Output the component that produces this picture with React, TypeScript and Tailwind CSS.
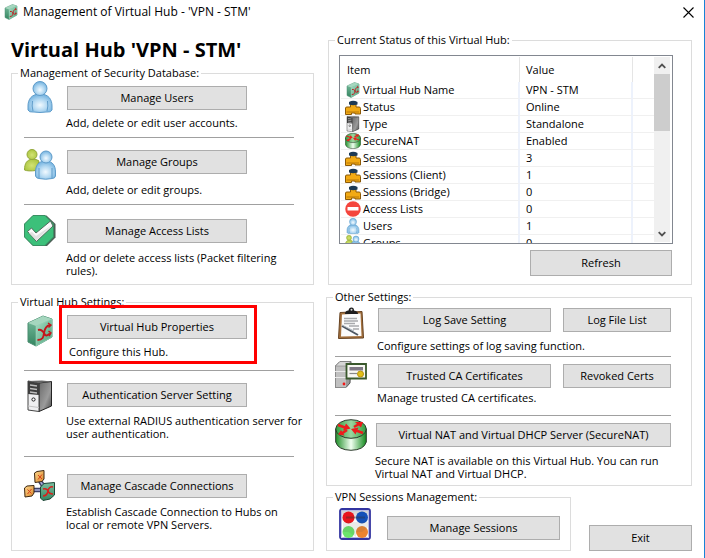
import type { ReactNode } from "react";

/* Gradientes usados por todos os ícones */
function Gradients() {
    return (
        <svg className="absolute h-0 w-0" aria-hidden="true">
            <defs>
                <radialGradient id="blue" cx="50%" cy="60%" r="60%">
                    <stop offset="0" stopColor="#f2faff" />
                    <stop offset="0.5" stopColor="#b4d9f2" />
                    <stop offset="1" stopColor="#6fb0de" />
                </radialGradient>
                <radialGradient id="lime" cx="50%" cy="55%" r="60%">
                    <stop offset="0" stopColor="#d3e375" />
                    <stop offset="1" stopColor="#a9c43c" />
                </radialGradient>
                <linearGradient id="face" x1="0" y1="0" x2="1" y2="1">
                    <stop offset="0" stopColor="#a9dcc4" />
                    <stop offset="1" stopColor="#4da57c" />
                </linearGradient>
                <linearGradient id="side" x1="0" y1="0" x2="0" y2="1">
                    <stop offset="0" stopColor="#7dc0a2" />
                    <stop offset="1" stopColor="#348560" />
                </linearGradient>
                <linearGradient id="can" x1="0" y1="0" x2="1" y2="0">
                    <stop offset="0" stopColor="#1f8f28" />
                    <stop offset="0.5" stopColor="#f0fff0" />
                    <stop offset="1" stopColor="#128a1c" />
                </linearGradient>
                <linearGradient id="canTop" x1="0" y1="0" x2="1" y2="0">
                    <stop offset="0" stopColor="#2f9c3b" />
                    <stop offset="0.5" stopColor="#9bd6a0" />
                    <stop offset="1" stopColor="#2f9c3b" />
                </linearGradient>
                <linearGradient id="metal" x1="0" y1="0" x2="1" y2="1">
                    <stop offset="0" stopColor="#6a6a6a" />
                    <stop offset="0.6" stopColor="#9b9b9b" />
                    <stop offset="1" stopColor="#4b4b4b" />
                </linearGradient>
                <linearGradient id="amber" x1="0" y1="0" x2="1" y2="1">
                    <stop offset="0" stopColor="#ffd98f" />
                    <stop offset="1" stopColor="#d9862a" />
                </linearGradient>
                <linearGradient id="pane" x1="0" y1="0" x2="0" y2="1">
                    <stop offset="0" stopColor="#c9c9c9" />
                    <stop offset="0.45" stopColor="#ffffff" />
                    <stop offset="1" stopColor="#ffffff" />
                </linearGradient>
            </defs>
        </svg>
    );
}

type IconProps = { size?: string };

function Icon({ size = "size-8", children }: IconProps & { children: ReactNode }) {
    return (
        <svg viewBox="0 0 32 32" className={`${size} block shrink-0`} aria-hidden="true">
            {children}
        </svg>
    );
}

const PERSON = "M16 13C7 13 4 19 4 25V29Q5 31.500 9 31H10Q16 32 22 31H23Q27 31.500 28 29V25C28 19 25 13 16 13Z";

function UserIcon({ size }: IconProps) {
    return (
        <Icon size={size}>
            <path d={PERSON} fill="url(#blue)" stroke="#5f9cca" />
            <circle cx="16" cy="7.500" r="7" fill="url(#blue)" stroke="#5f9cca" />
            <path d="M8.500 20Q7.500 25 9 30M23.500 20Q24.500 25 23 30" stroke="#5f9cca" fill="none" />
        </Icon>
    );
}

function GroupIcon({ size }: IconProps) {
    return (
        <Icon size={size}>
            <path d="M8 10C3 11 .5 14 .5 21Q4 22.500 12 21.500L15 12Q13 10 8 10Z" fill="url(#lime)" stroke="#94a83c" />
            <circle cx="8" cy="5.500" r="5" fill="url(#lime)" stroke="#94a83c" />
            <path d="M21.500 12C14 12 11.500 17 11.500 23V27Q12.500 29.500 15 29.500Q22 31 28 29.500Q31 29.500 31.500 27V23C31.500 17 29 12 21.500 12Z" fill="url(#blue)" stroke="#5f9cca" />
            <circle cx="22" cy="8" r="6" fill="url(#blue)" stroke="#5f9cca" />
            <path d="M15 19V29M28 19V29" stroke="#5f9cca" />
        </Icon>
    );
}

function CheckIcon() {
    return (
        <Icon>
            <path d="M9 .5H22.500L31.500 9V22.500L23 31H9L.5 22V9Z" fill="#4b5f55" />
            <path d="M9 .5H21L29.500 9V22L21 30.500H9L.5 22V9Z" fill="#3cc07a" stroke="#3a8f63" />
            <path d="M3.500 16.500L7.500 13L12 18L26.500 6L29 11L12.500 26.500Z" fill="#fafafa" stroke="#4f6b5c" />
            <path d="M5 18L8 17L12 21L28 10L12.500 25.500Z" fill="#e2e2e2" />
        </Icon>
    );
}

function HubIcon({ size }: IconProps) {
    return (
        <Icon size={size}>
            <path d="M4 8L19 1L28 4V22L12 31L4 27Z" fill="url(#side)" stroke="#4a8d70" />
            <path d="M4 8L19 1L28 4L12 11Z" fill="#a5d6be" />
            <path d="M12 11L28 4V22L12 31Z" fill="url(#face)" stroke="#9ed5bd" strokeWidth=".6" />
            <path d="M13.500 25C19 25 19.500 22 20 18S22 11 26 10M14 15C18 14 19.500 17 20.500 19S23 21 26 18.500" fill="none" stroke="#c4161c" strokeWidth="1.900" />
            <path d="M24 8L27 10L24.500 12.500M24.500 16L27 18L25 21" fill="none" stroke="#c4161c" strokeWidth="1.400" />
        </Icon>
    );
}

function TowerIcon({ size }: IconProps) {
    return (
        <Icon size={size}>
            <path d="M15 3L27.500 1.500V26L15 31.500Z" fill="url(#metal)" stroke="#222" />
            <path d="M4 1L15 3V31.500L4 30Z" fill="#efeff0" stroke="#444" />
            <path d="M4 1L15 3V15L4 14Z" fill="#3e3e3e" />
            <path d="M4 1L18 .5L27.500 1.500L15 3Z" fill="#666" />
            <path d="M6 5L13 6M6 8.500L13 9.500M6 12L13 13" stroke="#bdbdbd" strokeWidth="1.300" />
            <circle cx="9.500" cy="19.500" r="1.600" fill="#fff" stroke="#222" />
            <path d="M4 26L15 27.500" stroke="#c4c4c4" />
        </Icon>
    );
}

function CascadeIcon() {
    return (
        <Icon>
            <path d="M16 11L22 20M9 20H18" stroke="#3c3f68" strokeWidth="4.500" />
            <path d="M16 11L22 20M9 20H18" stroke="#a9b0dc" strokeWidth="1.500" />
            <path d="M10.500 3L13 1.500L20 .5V9L18 11.500L11 12.500Z" fill="url(#amber)" stroke="#3c2711" />
            <path d="M.5 18L3 16L10 15.500V23L8 26L1 27Z" fill="url(#amber)" stroke="#3c2711" />
            <path d="M16.500 17L20 13.500L30.500 12.500V25L26 29L19 30.500L16.500 28Z" fill="url(#side)" stroke="#1d4535" />
            <path d="M14 5L18 9M18 4.500L14 9.500M3.500 19.500L7.500 23.500M7.500 19L3.500 24" stroke="#d8401c" />
            <path d="M19 26Q23 26 24 21T29 17M19 19Q23 18 24 21T29 24" fill="none" stroke="#d8201c" strokeWidth="1.500" />
        </Icon>
    );
}

function RouterIcon({ size }: IconProps) {
    return (
        <Icon size={size}>
            <path d="M.7 10V23Q3 31 16 31.300Q29 31 31.300 23V10Z" fill="url(#can)" stroke="#2c3a2c" />
            <ellipse cx="16" cy="10" rx="15.300" ry="9.300" fill="url(#canTop)" stroke="#2c3a2c" />
            <path d="M3 6L10 8.500M6 15L12 11M28 14L21 11.500M19 8L24 5" stroke="#ee1c1c" strokeWidth="2.600" />
            <path d="M8 11.500L15.500 9.500L11 4.500ZM23.500 8.500L16 10L20.500 15.500ZM3 15.500L9.500 16.500L6 11ZM20 3L28 3L26 8.500Z" fill="#ee1c1c" />
        </Icon>
    );
}

function ClipboardIcon() {
    return (
        <Icon>
            <path d="M5 5.500L27 4.500L28.500 31L3.500 31.500Z" fill="#a5713d" stroke="#674322" />
            <path d="M7 7.500L25.500 6.500L26.500 29L6 29.500Z" fill="#fbfbfb" />
            <path d="M10 7Q10 3.500 13.500 3.500Q14 .5 16.500 .5T19 3.500Q23 4 23 7Z" fill="#1e1e1e" />
            <circle cx="16.500" cy="2.700" r="1" fill="#ddd" />
            <path d="M9 11.500H22M9 14H23M9 16.500H20M14 19H24M18 22H24" stroke="#a9aaad" strokeWidth="1.300" />
            <path d="M7 19L23 28" stroke="#4d5660" strokeWidth="2" />
            <path d="M7 18L19 24" stroke="#a8b2bc" />
        </Icon>
    );
}

function CertificateIcon() {
    return (
        <Icon>
            <path d="M.5 5L5 .5H16L15 22L11 26.500H.5Z" fill="#9a9a9a" stroke="#555" />
            <path d="M.5 5H11V26.500H.5Z" fill="#c0c0c0" />
            <path d="M.5 5L5 .5H16L11 5Z" fill="#d6d6d6" stroke="#777" strokeWidth=".5" />
            <path d="M0 10.500H11M0 16.500H11" stroke="#e9e9e9" />
            <circle cx="9" cy="23" r="1.400" fill="#f01818" />
            <path d="M11.500 3H31V17.500H11.500Z" fill="#f7f7f2" stroke="#39582c" strokeWidth="1.800" />
            <path d="M14.500 6H28V9.500H14.500Z" fill="#7e7884" />
            <path d="M14.500 12.500H22" stroke="#888" strokeWidth="1.200" />
            <circle cx="25.500" cy="13" r="3" fill="#e2bf18" stroke="#b4940f" />
        </Icon>
    );
}

function SessionsIcon() {
    return (
        <Icon>
            <rect x="1" y="1" width="30" height="30" rx="2" fill="url(#pane)" stroke="#3335a0" strokeWidth="1.800" />
            <rect x="2.500" y="2.500" width="27" height="27" rx="1" fill="none" stroke="#b9bbe6" />
            <circle cx="9.500" cy="9.500" r="6" fill="#e8141c" />
            <circle cx="23" cy="9.500" r="6" fill="#1450b8" />
            <circle cx="9.500" cy="24" r="6" fill="#6be56b" />
            <circle cx="23" cy="24" r="6" fill="#ec8430" />
            <path d="M7 9.500H26" stroke="#333" strokeWidth="2" opacity=".4" />
            <path d="M4 14H29V19L23 24H17V29L9.500 24H4Z" fill="#555" opacity=".12" />
        </Icon>
    );
}

function PlugIcon({ size }: IconProps) {
    return (
        <Icon size={size}>
            <path d="M1 18Q1 16 4 16H11V10H22V16H28Q31 16 31 19V30H20V28H13V31H1Z" fill="#f2aa14" stroke="#8c5a08" strokeWidth="2" />
            <path d="M8 6Q16 1 25 6V11Q16 14 8 11Z" fill="#1d3a54" />
            <path d="M3 26H28" stroke="#b97808" strokeWidth="2" />
        </Icon>
    );
}

function StopIcon({ size }: IconProps) {
    return (
        <Icon size={size}>
            <circle cx="16" cy="16" r="15.500" fill="#f4453d" />
            <rect x="5" y="12" width="22" height="7" rx="1" fill="#fff" />
        </Icon>
    );
}

/* Botão cinza padrão */
function Button({ children, className = "h-6 w-[180px]" }: { children: ReactNode; className?: string }) {
    return (
        <button type="button" className={`${className} block border border-[#adadad] bg-[#e1e1e1] pb-0.5 text-center leading-none`}>
            {children}
        </button>
    );
}

/* Caixa com título sobre a borda */
function Group({ title, className, children }: { title: string; className: string; children: ReactNode }) {
    return (
        <fieldset className={`${className} min-w-0 border border-[#dcdcdc]`}>
            <legend className="ml-1.5 h-3 px-0.5 leading-3">{title}</legend>
            {children}
        </fieldset>
    );
}

const rows = [
    { icon: <HubIcon size="size-4" />, item: "Virtual Hub Name", value: "VPN - STM" },
    { icon: <PlugIcon size="size-4" />, item: "Status", value: "Online" },
    { icon: <TowerIcon size="size-4" />, item: "Type", value: "Standalone" },
    { icon: <RouterIcon size="size-4" />, item: "SecureNAT", value: "Enabled" },
    { icon: <PlugIcon size="size-4" />, item: "Sessions", value: "3" },
    { icon: <PlugIcon size="size-4" />, item: "Sessions (Client)", value: "1" },
    { icon: <PlugIcon size="size-4" />, item: "Sessions (Bridge)", value: "0" },
    { icon: <StopIcon size="size-4" />, item: "Access Lists", value: "0" },
    { icon: <UserIcon size="size-4" />, item: "Users", value: "1" },
    { icon: <GroupIcon size="size-4" />, item: "Groups", value: "0" },
];

function StatusList() {
    return (
        <div className="flex h-[189px] overflow-hidden border border-[#828790] p-px">
            <table className="h-[195px] flex-1 table-fixed border-separate border-spacing-0 text-left">
                <thead>
                    <tr className="h-[25px]">
                        <th className="w-[179px] border-r border-[#e5e5e5] p-0 pl-1.5 font-normal">Item</th>
                        <th className="w-[113px] border-r border-[#e5e5e5] p-0 pl-1.5 font-normal">Value</th>
                        <th className="p-0"></th>
                    </tr>
                </thead>
                <tbody>
                    {rows.map((row) => (
                        <tr key={row.item} className="h-[17px]">
                            <td className="border-r-2 border-b border-r-[#edf2fc] border-b-[#f0f0f0] p-0 pl-1">
                                <div className="flex h-4 items-center gap-0.5 leading-4">
                                    {row.icon}
                                    {row.item}
                                </div>
                            </td>
                            <td className="border-r-2 border-b border-r-[#edf2fc] border-b-[#f0f0f0] p-0 pl-1.5 leading-4">{row.value}</td>
                            <td className="border-b border-[#f0f0f0] p-0"></td>
                        </tr>
                    ))}
                </tbody>
            </table>
            {/* Barra de rolagem */}
            <div className="mr-px flex w-4 flex-col bg-[#f0f0f0]">
                <button type="button" aria-label="Scroll up" className="flex h-[17px] items-center justify-center">
                    <svg viewBox="0 0 8 6" className="h-1.5 w-2"><path d="M.7 4.800L4 1.500L7.300 4.800" fill="none" stroke="#505050" strokeWidth="1.800" /></svg>
                </button>
                <div className="h-[57px] bg-[#cdcdcd]"></div>
                <button type="button" aria-label="Scroll down" className="mt-auto flex h-[17px] items-center justify-center">
                    <svg viewBox="0 0 8 6" className="h-1.5 w-2"><path d="M.7 1.200L4 4.500L7.300 1.200" fill="none" stroke="#505050" strokeWidth="1.800" /></svg>
                </button>
            </div>
        </div>
    );
}

export default function App() {
    return (
        <div className="min-h-screen border-r border-[#1883d7] bg-white font-['Open_Sans','Noto_Sans',sans-serif] text-[11px] leading-[13px] text-black">
            <Gradients />

            {/* Barra de título */}
            <header className="flex h-6 items-center gap-1 pr-2.5 pl-[3px] text-xs">
                <HubIcon size="size-4" />
                <span className="flex-1">Management of Virtual Hub - 'VPN - STM'</span>
                <button type="button" aria-label="Close">
                    <svg viewBox="0 0 11 11" className="size-[11px]"><path d="M.5 .5L10.500 10.500M10.500 .5L.5 10.500" stroke="#000" strokeWidth="1.100" /></svg>
                </button>
            </header>

            <main className="grid grid-cols-[minmax(0,303fr)_minmax(0,366fr)] gap-3 pr-3 pl-[11px]">
                {/* Coluna esquerda */}
                <div>
                    <h1 className="pt-[13px] pb-1 text-xl leading-[26px] font-bold">Virtual Hub 'VPN - STM'</h1>

                    <Group title="Management of Security Database:" className="">
                        <div className="pr-[19px] pl-3">
                            <div className="flex border-b border-[#a0a0a0] pb-2">
                                <div className="w-[42px] shrink-0 pt-0.5"><UserIcon /></div>
                                <div className="pt-[7px]">
                                    <div className="pl-px"><Button>Manage Users</Button></div>
                                    <p className="mt-1.5">Add, delete or edit user accounts.</p>
                                </div>
                            </div>
                            <div className="flex border-b border-[#a0a0a0] pb-2">
                                <div className="w-[42px] shrink-0 pt-[11px]"><GroupIcon /></div>
                                <div className="pt-3">
                                    <div className="pl-px"><Button>Manage Groups</Button></div>
                                    <p className="mt-[9px]">Add, delete or edit groups.</p>
                                </div>
                            </div>
                            <div className="flex pb-[7px]">
                                <div className="w-[42px] shrink-0 pt-2.5"><CheckIcon /></div>
                                <div className="pt-3.5">
                                    <div className="pl-px"><Button>Manage Access Lists</Button></div>
                                    <p className="mt-2">Add or delete access lists (Packet filtering<br />rules).</p>
                                </div>
                            </div>
                        </div>
                    </Group>

                    <Group title="Virtual Hub Settings:" className="mt-[11px]">
                        <div className="pr-[19px] pl-3">
                            <div className="relative flex border-b border-[#a0a0a0] pb-3">
                                <div className="w-[42px] shrink-0 pt-[7px]"><HubIcon /></div>
                                <div className="pt-[7px]">
                                    <div className="pl-px"><Button>Virtual Hub Properties</Button></div>
                                    <p className="mt-1.5 pl-[3px]">Configure this Hub.</p>
                                </div>
                                {/* Destaque vermelho */}
                                <div className="pointer-events-none absolute -top-[3px] left-[35px] h-[59px] w-[198px] border-3 border-[#ff0000]"></div>
                            </div>
                            <div className="flex border-b border-[#a0a0a0] pb-4">
                                <div className="w-[42px] shrink-0 pt-[9px]"><TowerIcon /></div>
                                <div className="pt-3">
                                    <div className="pl-px"><Button>Authentication Server Setting</Button></div>
                                    <p className="mt-[7px] whitespace-nowrap">Use external RADIUS authentication server for<br />user authentication.</p>
                                </div>
                            </div>
                            <div className="flex pb-[19px]">
                                <div className="w-[42px] shrink-0 pt-[13px]"><CascadeIcon /></div>
                                <div className="pt-[17px]">
                                    <div className="pl-px"><Button>Manage Cascade Connections</Button></div>
                                    <p className="mt-[7px] whitespace-nowrap">Establish Cascade Connection to Hubs on<br />local or remote VPN Servers.</p>
                                </div>
                            </div>
                        </div>
                    </Group>
                </div>

                {/* Coluna direita */}
                <div className="pt-2.5">
                    <Group title="Current Status of this Virtual Hub:" className="ml-0.5">
                        <div className="pr-[18px] pb-2 pl-2.5">
                            <div className="pt-[9px]"><StatusList /></div>
                            <div className="mt-1.5 flex justify-end pr-px">
                                <Button className="h-[26px] w-[142px]">Refresh</Button>
                            </div>
                        </div>
                    </Group>

                    <Group title="Other Settings:" className="mt-1.5">
                        <div className="pr-5 pb-[5px] pl-2">
                            <div className="flex border-b border-[#a0a0a0] pb-1">
                                <div className="w-[42px] shrink-0 pt-1"><ClipboardIcon /></div>
                                <div className="flex-1 pt-[5px]">
                                    <div className="flex justify-between pl-px">
                                        <Button className="h-6 w-[173px]">Log Save Setting</Button>
                                        <Button className="h-6 w-[108px]">Log File List</Button>
                                    </div>
                                    <p className="mt-[7px]">Configure settings of log saving function.</p>
                                </div>
                            </div>
                            <div className="flex border-b border-[#a0a0a0] pb-[11px]">
                                <div className="w-[42px] shrink-0 pt-1"><CertificateIcon /></div>
                                <div className="flex-1 pt-[7px]">
                                    <div className="flex justify-between pl-px">
                                        <Button className="h-6 w-[173px]">Trusted CA Certificates</Button>
                                        <Button className="h-6 w-[108px]">Revoked Certs</Button>
                                    </div>
                                    <p className="mt-[3px]">Manage trusted CA certificates.</p>
                                </div>
                            </div>
                            <div className="flex">
                                <div className="w-10 shrink-0 pt-[3px]"><RouterIcon /></div>
                                <div className="flex-1 pt-[7px]">
                                    <div className="pl-px"><Button className="h-6 w-full">Virtual NAT and Virtual DHCP Server (SecureNAT)</Button></div>
                                    <p className="mt-[7px] whitespace-nowrap">Secure NAT is available on this Virtual Hub. You can run<br />Virtual NAT and Virtual DHCP.</p>
                                </div>
                            </div>
                        </div>
                    </Group>

                    <div className="mt-[5px] flex items-end justify-between">
                        <Group title="VPN Sessions Management:" className="w-[245px]">
                            <div className="flex justify-between pr-2.5 pb-2.5 pl-3">
                                <div className="pt-[5px]"><SessionsIcon /></div>
                                <div className="pt-[13px]"><Button className="h-6 w-[173px]">Manage Sessions</Button></div>
                            </div>
                        </Group>
                        <Button className="h-[26px] w-[103px]">Exit</Button>
                    </div>
                </div>
            </main>
        </div>
    );
}
